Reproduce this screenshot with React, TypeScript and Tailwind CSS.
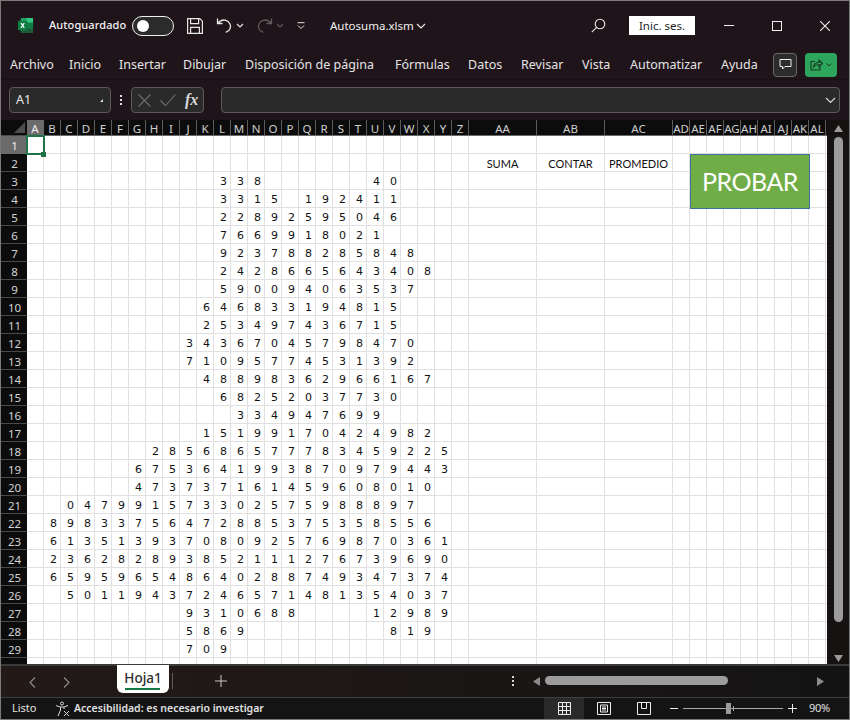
import React from "react";

const ui = "font-['Noto_Sans','Open_Sans',sans-serif]";

const letters = "A B C D E F G H I J K L M N O P Q R S T U V W X Y Z AA AB AC AD AE AF AG AH AI AJ AK AL".split(" ");

const rowsData: Record<number, [string, string][]> = {
  3: [["L", "338"], ["U", "40"]],
  4: [["L", "3315"], ["Q", "192411"]],
  5: [["L", "22892595046"]],
  6: [["L", "7669918021"]],
  7: [["L", "923788285848"]],
  8: [["L", "2428665643408"]],
  9: [["L", "590094063537"]],
  10: [["K", "646833194815"]],
  11: [["K", "253497436715"]],
  12: [["J", "34367045798470"]],
  13: [["J", "71095774531392"]],
  14: [["K", "48898362966167"]],
  15: [["L", "68252037730"]],
  16: [["M", "334947699"]],
  17: [["K", "15199170424982"]],
  18: [["H", "285686577783459225"]],
  19: [["G", "6753641993870979443"]],
  20: [["G", "473737161459608010"]],
  21: [["C", "047991573302575988897"]],
  22: [["B", "89833756472885375358556"]],
  23: [["B", "613513937080925769870361"]],
  24: [["B", "236282893852111276739690"]],
  25: [["B", "659596548640288749347374"]],
  26: [["C", "50119437246571481354037"]],
  27: [["J", "9310688"], ["U", "12989"]],
  28: [["J", "5869"], ["V", "819"]],
  29: [["J", "709"]],
};

const cellValue = (row: number, col: number): string => {
  if (row === 2) {
    if (col === 26) return "SUMA";
    if (col === 27) return "CONTAR";
    if (col === 28) return "PROMEDIO";
  }
  for (const [start, s] of rowsData[row] ?? []) {
    const i = col - letters.indexOf(start);
    if (i >= 0 && i < s.length) return s[i];
  }
  return "";
};

function Sheet() {
  const rows = Array.from({ length: 30 }, (_, i) => i + 1);
  return (
    <div className="relative flex-1 min-w-0 overflow-hidden bg-white grid grid-cols-[26px_repeat(26,17px)_repeat(3,68px)_repeat(9,17px)_1fr] grid-rows-[16px_repeat(30,18px)]">
      {/* corner */}
      <div className="bg-[#0c0c0c] border-b border-[#4a4a4a] flex items-end justify-end pr-[2px] pb-[2px]">
        <svg width="11" height="11" viewBox="0 0 11 11"><path d="M11 0V11H0Z" fill="#4d4d4d" /></svg>
      </div>
      {letters.map((l, i) => (
        <div
          key={l}
          className={`flex items-center justify-center pt-[2px] text-[11.5px] overflow-hidden whitespace-nowrap border-r border-b ${ui} ${
            i === 0 ? "bg-[#6b6b6b] text-[#f0f0f0] border-r-[#6b6b6b] border-b-[#8a8a8a]" : "bg-[#0c0c0c] text-[#cfcfcf] border-r-[#5c5c5c] border-b-[#6a6a6a]"
          }`}
        >
          {l}
        </div>
      ))}
      <div className="bg-[#0c0c0c] border-b border-[#6a6a6a]" />
      {rows.map((r) => (
        <React.Fragment key={r}>
          <div
            className={`flex items-center justify-center pl-[1px] pt-[3px] text-[11.5px] border-b ${ui} ${
              r === 1 ? "bg-[#6b6b6b] text-[#f0f0f0] border-[#6b6b6b]" : "bg-[#0c0c0c] text-[#d4d4d4] border-[#4a4a4a]"
            }`}
          >
            {r}
          </div>
          {letters.map((l, c) => {
            const v = cellValue(r, c);
            return (
              <div
                key={l}
                className={`border-r border-b border-[#e0e0e0] flex items-center whitespace-nowrap text-[#111111] ${
                  r === 2
                    ? "justify-center pt-[3px] font-['Lato',sans-serif] text-[11px]"
                    : "justify-end pr-[3px] pt-[4px] font-['DejaVu_Sans',sans-serif] text-[11px]"
                }`}
              >
                {v}
              </div>
            );
          })}
          <div className="border-b border-[#e0e0e0]" />
        </React.Fragment>
      ))}
      {/* selection */}
      <div className="absolute left-[25px] top-[15px] w-[19px] h-[20px] border-2 border-[#1f7246]">
        <div className="absolute right-[-3px] bottom-[-4px] w-[5px] h-[5px] bg-[#1f7246]" />
      </div>
      {/* shape */}
      <div className="absolute left-[689px] top-[34px] w-[120px] h-[55px] bg-[#70ad47] border border-[#41719c] flex items-center justify-center text-white text-[25px] tracking-[-0.5px] font-['Lato',sans-serif]">
        PROBAR
      </div>
    </div>
  );
}

function ExcelLogo() {
  return (
    <svg width="17" height="17" viewBox="0 0 18 18">
      <rect x="4" y="1" width="13" height="16" rx="1" fill="#21a366" />
      <rect x="10" y="1" width="7" height="5" fill="#33c481" />
      <rect x="10" y="6" width="7" height="6" fill="#107c41" />
      <rect x="4" y="12" width="13" height="5" fill="#185c37" />
      <rect x="1" y="4" width="10" height="10" rx="1" fill="#107c41" />
      <path d="M3.6 6.4h1.5L6 8l.9-1.6h1.4L6.8 9l1.5 2.6H6.9L6 9.9l-.9 1.7H3.6L5.2 9Z" fill="#fff" />
    </svg>
  );
}

function TitleBar() {
  return (
    <div className={`h-[49px] flex items-center shrink-0 text-[#f0f0f0] ${ui}`}>
      <div className="ml-[16px] w-[17px]"><ExcelLogo /></div>
      <span className="ml-[15px] w-[77px] text-[11px] tracking-[0.1px] font-medium whitespace-nowrap">Autoguardado</span>
      <div className="ml-[6px] w-[42px] h-[20px] rounded-full border border-[#f0f0f0] bg-[#2b2b2b] flex items-center pl-[4px]">
        <div className="w-[12px] h-[12px] rounded-full bg-white" />
      </div>
      <svg className="ml-[12px]" width="18" height="18" viewBox="0 0 18 18" fill="none" stroke="#e8e8e8" strokeWidth="1.2">
        <path d="M1.6 1.6h12.2l2.6 2.6v12.2H1.6Z" />
        <path d="M4.6 1.6v5h8v-5M4.6 16.4v-6h8.8v6" />
      </svg>
      <svg className="ml-[12px]" width="17" height="17" viewBox="0 0 17 17" fill="none" stroke="#e8e8e8" strokeWidth="1.3">
        <path d="M1.5 1.5v5h5M1.8 6.3C4 3.6 7 2.4 10 3.4c3.6 1.2 5.3 5 4.2 8-.7 2-2.3 3.3-4.4 4" />
      </svg>
      <svg className="ml-[3px]" width="8" height="5" viewBox="0 0 8 5" fill="none" stroke="#e8e8e8" strokeWidth="1.1"><path d="M1 1l3 3 3-3" /></svg>
      <svg className="ml-[12px]" width="17" height="17" viewBox="0 0 17 17" fill="none" stroke="#5f5a5c" strokeWidth="1.3">
        <path d="M15.5 1.5v5h-5M15.2 6.3C13 3.6 10 2.4 7 3.4c-3.6 1.2-5.3 5-4.2 8 .7 2 2.3 3.3 4.4 4" />
      </svg>
      <svg className="ml-[3px]" width="8" height="5" viewBox="0 0 8 5" fill="none" stroke="#5f5a5c" strokeWidth="1.1"><path d="M1 1l3 3 3-3" /></svg>
      <svg className="ml-[13px]" width="8" height="8" viewBox="0 0 8 8" fill="none" stroke="#e8e8e8" strokeWidth="1"><path d="M0.5 0.7h7M1 3.5l3 3 3-3" /></svg>
      <span className="ml-[25px] w-[83px] text-[11.5px] whitespace-nowrap">Autosuma.xlsm</span>
      <svg className="ml-[3px]" width="10" height="6" viewBox="0 0 10 6" fill="none" stroke="#e8e8e8" strokeWidth="1.2"><path d="M1 1l4 4 4-4" /></svg>
      <svg className="ml-[165px]" width="15" height="15" viewBox="0 0 15 15" fill="none" stroke="#e8e8e8" strokeWidth="1.1">
        <circle cx="9" cy="6" r="4.8" /><path d="M5.6 9.4L0.8 14.2" />
      </svg>
      <div className="ml-[23px] w-[66px] h-[19px] bg-white text-[#1f1f1f] text-[11.5px] flex items-center justify-center whitespace-nowrap">Inic. ses.</div>
      <div className="ml-[29px] w-[10px] h-[1px] bg-[#f0f0f0]" />
      <div className="ml-[38px] w-[10px] h-[10px] border border-[#f0f0f0]" />
      <svg className="ml-[38px]" width="10" height="10" viewBox="0 0 10 10" stroke="#f0f0f0" strokeWidth="1.1"><path d="M0 0l10 10M10 0L0 10" /></svg>
    </div>
  );
}

function RibbonTabs() {
  const base = "text-[12.5px] pt-[2px] whitespace-nowrap";
  return (
    <div className={`h-[30px] flex items-center shrink-0 text-[#e4e4e4] pl-[9px] border-b border-[#171014] ${ui}`}>
      <span className={`${base} w-[59px]`}>Archivo</span>
      <span className={`${base} w-[50px]`}>Inicio</span>
      <span className={`${base} w-[64px]`}>Insertar</span>
      <span className={`${base} w-[62px]`}>Dibujar</span>
      <span className={`${base} w-[150px]`}>Disposición de página</span>
      <span className={`${base} w-[73px]`}>Fórmulas</span>
      <span className={`${base} w-[53px]`}>Datos</span>
      <span className={`${base} w-[61px]`}>Revisar</span>
      <span className={`${base} w-[48px]`}>Vista</span>
      <span className={`${base} w-[91px]`}>Automatizar</span>
      <span className={`${base} w-[52px]`}>Ayuda</span>
      <div className="w-[24px] h-[24px] rounded-[4px] border border-[#6a6a6a] bg-[#2c2c2c] flex items-center justify-center">
        <svg width="13" height="13" viewBox="0 0 13 13" fill="none" stroke="#f0f0f0" strokeWidth="1"><path d="M1 1.5h11v7H6L3.5 11V8.500H1Z" /></svg>
      </div>
      <div className="ml-[8px] w-[32px] h-[24px] rounded-[4px] bg-[#2ea55d] flex items-center justify-center gap-[3px]">
        <svg width="13" height="13" viewBox="0 0 13 13" fill="none" stroke="#16381f" strokeWidth="1.1">
          <path d="M5 3.500H1v8.500h9V8" /><path d="M3.500 9c.5-3 2.500-4.500 5.500-4.500V2l3.500 3.500L9 8.500V6.500C7 6.500 5 7.200 3.500 9Z" />
        </svg>
        <svg width="6" height="4" viewBox="0 0 6 4" fill="none" stroke="#16381f" strokeWidth="1"><path d="M.5.5L3 3 5.500.5" /></svg>
      </div>
    </div>
  );
}

function FormulaBar() {
  return (
    <div className={`h-[40px] flex items-center shrink-0 pl-[8px] pr-[9px] ${ui}`}>
      <div className="w-[102px] h-[26px] rounded-[4px] border border-[#5d5a5b] bg-[#2a2a2a] flex items-center justify-between pl-[6px] pr-[7px] text-[12.5px] text-[#e6e6e6]">
        A1
        <svg width="3" height="3" viewBox="0 0 3 3"><path d="M3 0v3H0Z" fill="#e0e0e0" /></svg>
      </div>
      <div className="ml-[9px] flex flex-col gap-[2px]">
        <div className="w-[2px] h-[2px] bg-[#e0e0e0]" />
        <div className="w-[2px] h-[2px] bg-[#e0e0e0]" />
        <div className="w-[2px] h-[2px] bg-[#e0e0e0]" />
      </div>
      <div className="ml-[9px] w-[73px] h-[26px] rounded-[4px] border border-[#5d5a5b] bg-[#2a2a2a] flex items-center pl-[6px]">
        <svg width="13" height="13" viewBox="0 0 13 13" stroke="#6e6e6e" strokeWidth="1.1"><path d="M.5.500l12 12M12.500.500l-12 12" /></svg>
        <svg className="ml-[9px]" width="16" height="12" viewBox="0 0 16 12" fill="none" stroke="#6e6e6e" strokeWidth="1.1"><path d="M.5 6.500l5 5 10-11" /></svg>
        <span className="ml-[9px] font-['Liberation_Serif',serif] italic font-bold text-[#d8d8d8] text-[16px] leading-none">fx</span>
      </div>
      <div className="ml-[17px] flex-1 h-[26px] rounded-[4px] border border-[#5d5a5b] bg-[#2a2a2a] flex items-center justify-end pr-[3px]">
        <svg width="11" height="7" viewBox="0 0 11 7" fill="none" stroke="#d8d8d8" strokeWidth="1.2"><path d="M1 1l4.500 4.500L10 1" /></svg>
      </div>
    </div>
  );
}

function Scrollbar() {
  return (
    <div className="w-[22px] shrink-0 bg-[#161212] flex flex-col items-center">
      <svg className="mt-[5px]" width="9" height="7" viewBox="0 0 9 7"><path d="M4.500 0L9 7H0Z" fill="#9a9a9a" /></svg>
      <div className="mt-[5px] w-[9px] h-[485px] rounded-full bg-[#9c9c9c]" />
      <div className="flex-1" />
      <svg className="mb-[2px]" width="9" height="7" viewBox="0 0 9 7"><path d="M4.500 7L9 0H0Z" fill="#9a9a9a" /></svg>
    </div>
  );
}

function TabBar() {
  return (
    <div className={`h-[32px] shrink-0 flex items-start bg-gradient-to-r from-[#231a18] to-[#141314] border-t border-[#3a3a3a] ${ui}`}>
      <svg className="ml-[28px] mt-[11px]" width="7" height="11" viewBox="0 0 7 11" fill="none" stroke="#8f8f8f" strokeWidth="1.1"><path d="M6 .5l-5 5 5 5" /></svg>
      <svg className="ml-[27px] mt-[11px]" width="7" height="11" viewBox="0 0 7 11" fill="none" stroke="#8f8f8f" strokeWidth="1.1"><path d="M1 .5l5 5-5 5" /></svg>
      <div className="relative ml-[47px] mt-[-1px] w-[52px] h-[28px] bg-white rounded-b-[6px] flex justify-center pt-[3px] text-[13.5px] font-medium text-[#2b2b2b]">
        Hoja1
        <div className="absolute left-[8px] right-[9px] bottom-[3px] h-[2px] bg-[#107c41]" />
      </div>
      <div className="ml-[3px] mt-[7px] w-[1px] h-[16px] bg-[#5c5c5c]" />
      <svg className="ml-[42px] mt-[9px]" width="12" height="12" viewBox="0 0 12 12" stroke="#c8c8c8" strokeWidth="1"><path d="M6 0v12M0 6h12" /></svg>
      <div className="ml-[285px] mt-[10px] flex flex-col gap-[2px]">
        <div className="w-[2px] h-[2px] bg-[#d8d8d8]" />
        <div className="w-[2px] h-[2px] bg-[#d8d8d8]" />
        <div className="w-[2px] h-[2px] bg-[#d8d8d8]" />
      </div>
      <svg className="ml-[19px] mt-[11px]" width="7" height="9" viewBox="0 0 7 9"><path d="M0 4.500L7 0V9Z" fill="#8c8c8c" /></svg>
      <div className="ml-[5px] mt-[10px] w-[183px] h-[9px] rounded-full bg-[#9c9c9c]" />
      <svg className="ml-[89px] mt-[11px]" width="7" height="9" viewBox="0 0 7 9"><path d="M7 4.500L0 0V9Z" fill="#8c8c8c" /></svg>
    </div>
  );
}

function StatusBar() {
  return (
    <div className={`flex-1 flex items-center bg-[#141414] border-t border-[#3f3f3f] text-[#e0e0e0] ${ui}`}>
      <span className="ml-[11px] w-[43px] text-[11px]">Listo</span>
      <svg width="15" height="16" viewBox="0 0 15 16" fill="none" stroke="#d8d8d8" strokeWidth="1">
        <circle cx="7" cy="2.500" r="1.500" /><path d="M1 4.500l4 1.500h4l4-1.500M5.500 6v3L3 15M9 6v2" /><path d="M9 10l5 5M14 10l-5 5" />
      </svg>
      <span className="ml-[4px] w-[470px] text-[10.5px] font-semibold whitespace-nowrap">Accesibilidad: es necesario investigar</span>
      <div className="w-[40px] h-full bg-[#2a2a2a] flex items-center justify-center">
        <svg width="13" height="13" viewBox="0 0 13 13" fill="none" stroke="#ececec" strokeWidth="1"><path d="M.5.500h12v12H.5ZM.5 4.500h12M.5 8.500h12M4.500.500v12M8.500.500v12" /></svg>
      </div>
      <svg className="ml-[13px]" width="14" height="13" viewBox="0 0 14 13" fill="none" stroke="#ececec" strokeWidth="1"><path d="M.5.500h13v12H.5ZM3.500 3h7v7h-7ZM5 5h4M5 6.500h4M5 8h4" /></svg>
      <svg className="ml-[26px]" width="14" height="13" viewBox="0 0 14 13" fill="none" stroke="#ececec" strokeWidth="1"><path d="M.5.500h13v12H.5ZM4.500.500v6h5v-6" /></svg>
      <div className="ml-[19px] w-[8px] h-[1px] bg-[#ececec]" />
      <div className="relative ml-[5px] w-[100px] h-[1px] bg-[#a8a8a8]">
        <div className="absolute left-[43px] top-[-5px] w-[5px] h-[11px] bg-[#9a9a9a]" />
        <div className="absolute left-[50px] top-[-2px] w-[1px] h-[5px] bg-[#a8a8a8]" />
      </div>
      <svg className="ml-[5px]" width="9" height="9" viewBox="0 0 9 9" stroke="#ececec" strokeWidth="1"><path d="M4.500 0v9M0 4.500h9" /></svg>
      <span className="ml-[12px] text-[11px] tracking-[-0.3px]">90%</span>
    </div>
  );
}

export default function App() {
  return (
    <div className="w-[850px] h-[720px] overflow-hidden flex flex-col bg-[#1f1419] border border-[#7a7a7a]">
      <TitleBar />
      <RibbonTabs />
      <FormulaBar />
      <div className="h-[545px] shrink-0 flex border-b border-[#3a3a3a]">
        <Sheet />
        <Scrollbar />
      </div>
      <TabBar />
      <StatusBar />
    </div>
  );
}
